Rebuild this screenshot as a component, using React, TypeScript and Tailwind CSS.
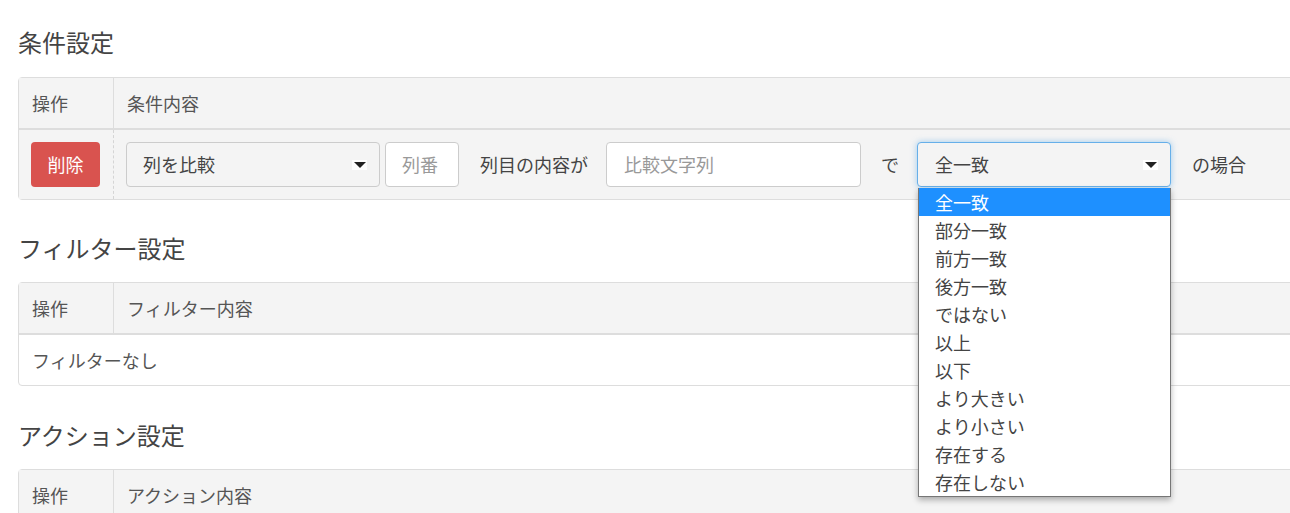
import React from 'react';

const options = [
  '全一致',
  '部分一致',
  '前方一致',
  '後方一致',
  'ではない',
  '以上',
  '以下',
  'より大きい',
  'より小さい',
  '存在する',
  '存在しない',
];

const Arrow: React.FC = () => (
  <span className="flex h-[10px] w-[15px] items-center justify-center bg-white">
    <svg width="12" height="6" viewBox="0 0 12 6">
      <path d="M0 0 L12 0 L6 6 Z" fill="#222" />
    </svg>
  </span>
);

const SectionTitle: React.FC<{ children: React.ReactNode }> = ({ children }) => (
  <h3 className="h-[26px] text-[24px] leading-[26px] text-[#444]">{children}</h3>
);

const HeadRow: React.FC<{ label: string }> = ({ label }) => (
  <div className="flex h-[52px] border-b-2 border-[#dddddd] bg-[#f4f4f4]">
    <div className="flex w-[95px] items-center border-r border-[#dddddd] pl-[13px]">操作</div>
    <div className="flex items-center pl-[13px]">{label}</div>
  </div>
);

export default function App() {
  return (
    <div
      className="h-[513px] w-[1290px] overflow-hidden bg-white pl-[18px] pt-[29px] text-[18px] text-[#555]"
      style={{ fontFamily: '"Noto Sans CJK JP", "Noto Sans", sans-serif' }}
    >
      <div className="w-[1300px]">
        {/* 条件設定 */}
        <SectionTitle>条件設定</SectionTitle>
        <div className="mt-[22px] rounded-[4px] border border-[#dddddd]">
          <HeadRow label="条件内容" />
          <div className="flex h-[69px] bg-[#f4f4f4]">
            <div className="flex w-[95px] items-center border-r border-dashed border-[#d5d5d5] pl-[12px]">
              <button className="h-[45px] w-[69px] rounded-[4px] bg-[#d9534f] text-white">削除</button>
            </div>
            <div className="relative flex items-center pl-[12px]">
              <div className="flex h-[45px] w-[254px] items-center justify-between rounded-[4px] border border-[#cccccc] bg-[#f4f4f4] pl-[16px] pr-[12px] text-[#444]">
                <span>列を比較</span>
                <Arrow />
              </div>
              <div className="ml-[5px] flex h-[45px] w-[74px] items-center rounded-[4px] border border-[#cccccc] bg-white pl-[16px] text-[#999]">
                列番
              </div>
              <span className="ml-[21px] text-[#444]">列目の内容が</span>
              <div className="ml-[18px] flex h-[45px] w-[255px] items-center rounded-[4px] border border-[#cccccc] bg-white pl-[17px] text-[#999]">
                比較文字列
              </div>
              <span className="ml-[20px] text-[#444]">で</span>
              <div className="relative ml-[18px]">
                <div className="flex h-[45px] w-[254px] items-center justify-between rounded-[4px] border border-[#66afe9] bg-[#f4f4f4] pl-[17px] pr-[12px] text-[#444] shadow-[0_0_6px_rgba(102,175,233,0.6)]">
                  <span>全一致</span>
                  <Arrow />
                </div>
                <ul className="absolute left-[1px] top-[46px] z-10 w-[253px] border-x border-b border-[#767676] bg-white text-[#444] shadow-[0_3px_6px_rgba(0,0,0,0.3)]">
                  {options.map((o, i) => (
                    <li
                      key={o}
                      className={
                        'h-[28px] pl-[16px] leading-[28px] ' + (i === 0 ? 'bg-[#1e90ff] text-white' : '')
                      }
                    >
                      {o}
                    </li>
                  ))}
                </ul>
              </div>
              <span className="ml-[21px] text-[#444]">の場合</span>
            </div>
          </div>
        </div>

        {/* フィルター設定 */}
        <div className="mt-[35px]">
          <SectionTitle>フィルター設定</SectionTitle>
        </div>
        <div className="mt-[21px] rounded-[4px] border border-[#dddddd]">
          <HeadRow label="フィルター内容" />
          <div className="flex h-[50px] items-center pl-[13px]">フィルターなし</div>
        </div>

        {/* アクション設定 */}
        <div className="mt-[36px]">
          <SectionTitle>アクション設定</SectionTitle>
        </div>
        <div className="mt-[21px] rounded-[4px] border border-[#dddddd]">
          <HeadRow label="アクション内容" />
        </div>
      </div>
    </div>
  );
}
